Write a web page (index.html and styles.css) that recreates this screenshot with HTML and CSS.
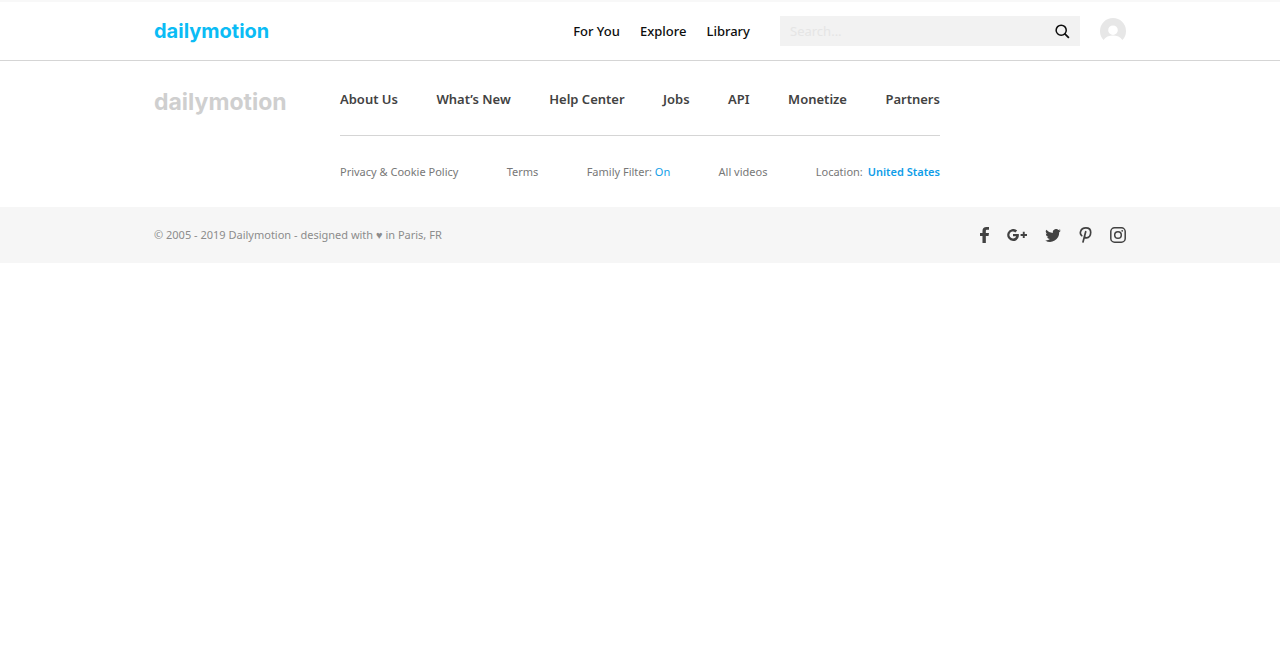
FILE: index.html
```html
<!DOCTYPE html>
<html lang="en">
<head>
<meta charset="utf-8">
<meta name="viewport" content="width=device-width, initial-scale=1">
<title>Dailymotion</title>
<link rel="stylesheet" href="styles.css">
</head>
<body>
<header class="header">
  <div class="container header-row">
    <a class="logo" href="#">dailymotion</a>
    <nav class="main-nav" aria-label="Main">
      <a href="#">For You</a>
      <a href="#">Explore</a>
      <a href="#">Library</a>
    </nav>
    <form class="search">
      <input class="search-input" type="text" placeholder="Search..." aria-label="Search">
      <button class="search-button" type="button" aria-label="Submit search">
        <svg width="15" height="15" viewBox="0 0 16 16" fill="none" stroke="#0d0d0d" stroke-width="1.6"><circle cx="6.6" cy="6.6" r="5.4"/><path d="M10.3 10.3 14.8 14.8" stroke-width="1.900"/></svg>
      </button>
    </form>
    <button class="avatar" type="button" aria-label="Account">
      <svg width="26" height="26" viewBox="0 0 26 26"><path fill="#e7e7e7" fill-rule="evenodd" d="M3.600 22A13 13 0 1 1 22.400 22C20.500 19 17 17.600 13 17.600S5.500 19 3.600 22ZM13 7.400a4.800 4.800 0 1 0 0 9.600 4.800 4.800 0 1 0 0-9.600Z"/></svg>
    </button>
  </div>
</header>
<footer>
  <div class="container footer-row">
    <a class="logo logo-muted" href="#">dailymotion</a>
    <div class="footer-links">
      <nav class="primary-links" aria-label="Company">
        <a href="#">About Us</a>
        <a href="#">What’s New</a>
        <a href="#">Help Center</a>
        <a href="#">Jobs</a>
        <a href="#">API</a>
        <a href="#">Monetize</a>
        <a href="#">Partners</a>
      </nav>
      <div class="secondary-links">
        <a href="#">Privacy &amp; Cookie Policy</a>
        <a href="#">Terms</a>
        <span>Family Filter: <a class="accent" href="#">On</a></span>
        <a href="#">All videos</a>
        <span class="location">Location: <a class="accent country" href="#">United States</a></span>
      </div>
    </div>
  </div>
  <div class="legal">
    <div class="container legal-row">
      <p class="copyright">© 2005 - 2019 Dailymotion - designed with ♥ in Paris, FR</p>
      <div class="social">
        <a href="#" aria-label="Facebook"><svg width="9" height="16" viewBox="0 0 8 16" preserveAspectRatio="none"><path d="M2.200 16V8.900H0V6.100h2.200V3.900C2.200 1.400 3.500 0 5.700 0H8v2.700H6.500C5.500 2.700 5.200 3.200 5.200 4v2.100H8L7.600 8.900H5.200V16Z"/></svg></a>
        <a href="#" aria-label="Google Plus"><svg width="20" height="12" viewBox="0 0 20 12"><path d="M6 4.900v2.400h3.100C8.700 8.600 7.700 9.500 6.100 9.500A3.500 3.500 0 1 1 8.300 3.400L10.200 1.500A6 6 0 1 0 6.100 12C9.500 12 11.900 9.600 11.900 6.100L11.800 4.900ZM15.800 2.800v2.200h-2.200v1.900h2.200v2.200h1.900V6.900H20V5h-2.300V2.800Z"/></svg></a>
        <a href="#" aria-label="Twitter"><svg width="16" height="13" viewBox="0 0 24 20"><path d="M24 2.400a10 10 0 0 1-2.800.8A5 5 0 0 0 23.300.5a10 10 0 0 1-3.100 1.200A4.900 4.900 0 0 0 11.800 6.200 14 14 0 0 1 1.700 1a4.900 4.900 0 0 0 1.500 6.600A5 5 0 0 1 1 7v.1A4.900 4.900 0 0 0 4.900 12a5 5 0 0 1-2.200.1 4.900 4.900 0 0 0 4.600 3.400A9.900 9.900 0 0 1 0 17.500 14 14 0 0 0 21.500 5.100 10 10 0 0 0 24 2.400Z"/></svg></a>
        <a href="#" aria-label="Pinterest"><svg width="13" height="16" viewBox="0 0 12 16"><path fill="none" stroke="#424242" stroke-width="1.700" stroke-linecap="round" stroke-linejoin="round" d="M2.200 8.600C.9 7.500.6 5.900 1.100 4.400 1.800 2.200 3.900.9 6.400.9 9.200.9 11.200 2.700 11.200 5.300c0 3-1.700 5.500-4.100 5.500-1.100 0-1.900-.5-2.200-1.200M6.200 4.700 3.500 15"/></svg></a>
        <a href="#" aria-label="Instagram"><svg width="16" height="16" viewBox="0 0 16 16" fill="none" stroke="#424242" stroke-width="1.500"><rect x=".8" y=".8" width="14.400" height="14.400" rx="3.800"/><circle cx="8" cy="8" r="3.300"/><circle cx="12.200" cy="3.800" r=".9" fill="#424242" stroke="none"/></svg></a>
      </div>
    </div>
  </div>
</footer>
</body>
</html>
```
FILE: styles.css
```css
* { box-sizing: border-box; }
body {
  margin: 0;
  background: #fff;
  color: #0d0d0d;
  font-family: "Noto Sans", "Open Sans", sans-serif;
}
a { color: inherit; text-decoration: none; }
svg { display: block; }
button { padding: 0; border: 0; background: none; cursor: pointer; }
.container {
  width: 100%;
  max-width: 1020px;
  margin: 0 auto;
  padding: 0 24px;
}
.header {
  border-top: 2px solid #f8f8f8;
  border-bottom: 1px solid #d5d5d5;
}
.header-row {
  display: flex;
  align-items: center;
  height: 58px;
}
.logo {
  color: #0bbcf5;
  font-family: Inter, sans-serif;
  font-size: 20px;
  font-weight: 700;
  line-height: 24px;
}
.main-nav {
  display: flex;
  gap: 20px;
  margin-left: auto;
  font-size: 13px;
  font-weight: 500;
  line-height: 20px;
}
.search {
  display: flex;
  width: 300px;
  height: 30px;
  margin-left: 30px;
  background: #f2f2f2;
}
.search-input {
  flex: 1;
  min-width: 0;
  padding: 0 10px;
  border: 0;
  background: none;
  font: 13px "Noto Sans", sans-serif;
}
.search-input::placeholder { color: #e5e5e5; opacity: 1; }
.search-button { padding: 0 10px; }
.avatar { margin-left: 20px; }
.footer-row {
  display: flex;
  align-items: flex-start;
  padding-top: 28px;
  padding-bottom: 25px;
}
.logo-muted {
  width: 186px;
  color: #cfcfcf;
  font-size: 23px;
  line-height: 26px;
}
.footer-links { width: 600px; }
.primary-links {
  display: flex;
  justify-content: space-between;
  padding-bottom: 26px;
  border-bottom: 1px solid #d5d5d5;
  color: #424242;
  font-size: 13px;
  font-weight: 600;
  line-height: 20px;
}
.secondary-links {
  display: flex;
  justify-content: space-between;
  padding-top: 26px;
  color: #777;
  font-size: 11px;
  line-height: 20px;
}
.accent { color: #0f9de8; }
.country { margin-left: 2px; font-weight: 600; }
.legal { background: #f6f6f6; }
.legal-row {
  display: flex;
  align-items: center;
  justify-content: space-between;
  height: 56px;
}
.copyright {
  margin: 0;
  color: #8c8c8c;
  font-size: 11px;
  line-height: 20px;
}
.social {
  display: flex;
  align-items: center;
  gap: 18px;
  fill: #424242;
}
```
